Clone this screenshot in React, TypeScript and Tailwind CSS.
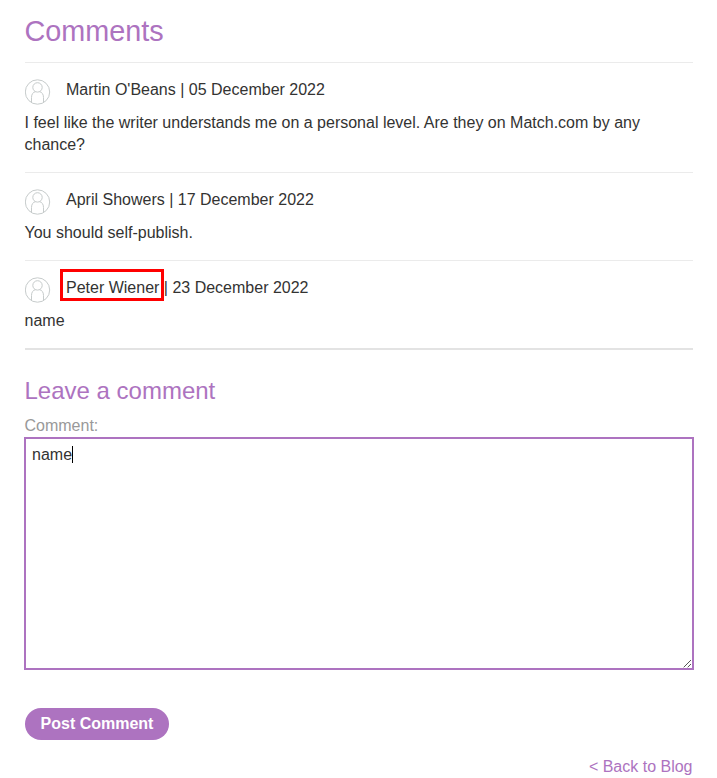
import React from "react";

type Entry = { author: string; date: string; body: string; marked?: boolean };

const entries: Entry[] = [
  { author: "Martin O'Beans", date: "05 December 2022", body: "I feel like the writer understands me on a personal level. Are they on Match.com by any chance?" },
  { author: "April Showers", date: "17 December 2022", body: "You should self-publish." },
  { author: "Peter Wiener", date: "23 December 2022", body: "name", marked: true },
];

function Avatar() {
  return (
    <svg className="mt-4 block size-[26px] shrink-0" viewBox="0 0 26 26" fill="none" stroke="#c6cbcb" strokeWidth="1">
      <circle cx="12.5" cy="13" r="12.2" />
      <circle cx="12.5" cy="8.4" r="4.7" />
      <path d="M6.5 24V18.5C6.5 15.2 8 13.2 10.6 12.6M14.4 12.6C17 13.2 18.5 15.2 18.5 18.5V24" />
    </svg>
  );
}

function Comment({ author, date, body, marked }: Entry) {
  return (
    <section className="border-t border-[#ebebeb] pb-4">
      <div className="flex h-[49px] items-start">
        <Avatar />
        <p className="ml-[15.5px] mt-4 leading-[22px]">
          <span className="relative">
            {author}
            {marked && <span className="absolute -left-[6px] -top-[10px] h-[32px] w-[104px] border-[3px] border-[#f00]" />}
          </span>
          {" | "}{date}
        </p>
      </div>
      <p className="leading-[22px]">{body}</p>
    </section>
  );
}

export default function App() {
  return (
    <main className="h-[778px] w-[717px] overflow-hidden bg-white px-[24.5px] font-['Liberation_Sans',Arial,sans-serif] text-base text-[#333332]">
      <h1 className="h-[62px] pt-[11px] text-[28.8px] leading-10 text-[#ad73c0]">Comments</h1>
      {entries.map((e) => <Comment key={e.author} {...e} />)}
      <div className="h-0.5 bg-[#e3e3e3]" />
      <h2 className="mt-6 text-2xl leading-[34px] text-[#ad73c0]">Leave a comment</h2>
      <div className="mt-[7px] leading-[22px] text-[#999]">Comment:</div>
      <div className="relative -mx-px flex h-[233px] items-start border-2 border-[#ad73c0] pl-[6.5px] pt-[5px] leading-[22px]">
        name<span className="-ml-[0.5px] mt-[2px] h-[17px] w-px bg-black" />
        <svg className="absolute bottom-0 right-0 size-[10px]" viewBox="0 0 10 10" stroke="#555" strokeWidth="1">
          <path d="M1.7 9.3L9 2M5.7 9.3L9 6" />
        </svg>
      </div>
      <button className="mt-[38px] flex h-8 w-36 items-start justify-center rounded-full bg-[#ad73c0] pl-px pt-[5px] font-bold leading-[22px] text-white">Post Comment</button>
      <div className="mt-4 text-right leading-[22px] text-[#ad73c0]">&lt; Back to Blog</div>
    </main>
  );
}
